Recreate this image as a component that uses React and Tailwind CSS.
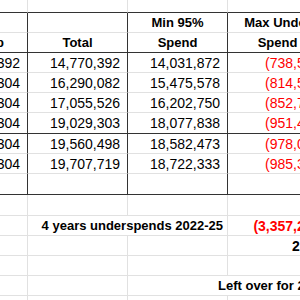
import clsx from "clsx";

const rows = [
  { cap: "14,770,392", total: "14,770,392", min: "14,031,872", under: "(738,520)" },
  { cap: "16,289,304", total: "16,290,082", min: "15,475,578", under: "(814,504)" },
  { cap: "16,289,304", total: "17,055,526", min: "16,202,750", under: "(852,776)" },
  { cap: "16,289,304", total: "19,029,303", min: "18,077,838", under: "(951,465)" },
  { cap: "16,289,304", total: "19,560,498", min: "18,582,473", under: "(978,025)" },
  { cap: "16,289,304", total: "19,707,719", min: "18,722,333", under: "(985,386)" },
];

function Cell({ w, r = "light", b = "light", className, children }) {
  return (
    <div
      className={clsx(
        "flex h-full shrink-0 overflow-hidden whitespace-nowrap border-r border-b leading-[20px]",
        w,
        r === "dark" ? "border-r-[#333333]" : "border-r-[#e1e1e1]",
        b === "dark" ? "border-b-[#333333]" : "border-b-[#e1e1e1]",
        className
      )}
    >
      {children}
    </div>
  );
}

function Row({ h = "h-[20px]", children }) {
  return <div className={clsx("flex", h)}>{children}</div>;
}

function Blank({ h, r = "light", b = "light" }) {
  return (
    <Row h={h}>
      <Cell w="w-[28px]" r={r} b={b} />
      <Cell w="w-[100px]" r={r} b={b} />
      <Cell w="w-[100px]" r={r} b={b} />
      <Cell w="w-[100px]" r={r} b={b} />
    </Row>
  );
}

export default function App() {
  return (
    <div className="h-[300px] w-[300px] overflow-hidden bg-white font-['Liberation_Sans',Arial,sans-serif] text-[14px] text-black">
      <div className="w-[400px]">
        <Blank h="h-[13px]" b="dark" />

        <Row>
          <Cell w="w-[28px]" r="dark" />
          <Cell w="w-[100px]" r="dark" />
          <Cell w="w-[100px]" r="dark" className="justify-center text-[13px] font-bold">
            Min 95%
          </Cell>
          <Cell w="w-[100px]" r="dark" className="justify-center text-[13px] font-bold">
            Max Under
          </Cell>
        </Row>

        <Row>
          <Cell w="w-[28px]" r="dark" b="dark" className="justify-end pr-[23px] text-[13px] font-bold">
            Cap
          </Cell>
          <Cell w="w-[100px]" r="dark" b="dark" className="justify-center text-[13px] font-bold">
            Total
          </Cell>
          <Cell w="w-[100px]" r="dark" b="dark" className="justify-center text-[13px] font-bold">
            Spend
          </Cell>
          <Cell w="w-[100px]" r="dark" b="dark" className="justify-center text-[13px] font-bold">
            Spend
          </Cell>
        </Row>

        {rows.map((row, i) => {
          const b = i === 3 ? "dark" : "light";
          return (
            <Row key={i} h={i === 3 ? "h-[21px]" : "h-[20px]"}>
              <Cell w="w-[28px]" r="dark" b={b} className="justify-end pr-[7px]">
                {row.cap}
              </Cell>
              <Cell w="w-[100px]" r="dark" b={b} className="justify-end pr-[7px]">
                {row.total}
              </Cell>
              <Cell w="w-[100px]" r="dark" b={b} className="justify-end pr-[7px]">
                {row.min}
              </Cell>
              <Cell w="w-[100px]" r="dark" b={b} className="justify-end pr-[2px] text-[#ff0000]">
                {row.under}
              </Cell>
            </Row>
          );
        })}

        <Blank h="h-[21px]" r="dark" b="dark" />
        <Blank h="h-[21px]" />

        <Row>
          <Cell w="w-[28px]" />
          <Cell w="w-[200px]" className="justify-end pr-[4px] text-[13px] font-bold">
            4 years underspends 2022-25
          </Cell>
          <Cell w="w-[100px]" className="justify-end pr-[2px] font-bold text-[#ff0000]">
            (3,357,265)
          </Cell>
        </Row>

        <Row>
          <Cell w="w-[28px]" />
          <Cell w="w-[100px]" />
          <Cell w="w-[100px]" />
          <Cell w="w-[100px]" className="pl-[64px] font-bold">
            2,000
          </Cell>
        </Row>

        <Blank />

        <Row>
          <Cell w="w-[28px]" />
          <Cell w="w-[100px]" />
          <Cell w="w-[200px]" className="pl-[90px] text-[13px] font-bold">
            Left over for 2026
          </Cell>
        </Row>

        <Blank />
      </div>
    </div>
  );
}
